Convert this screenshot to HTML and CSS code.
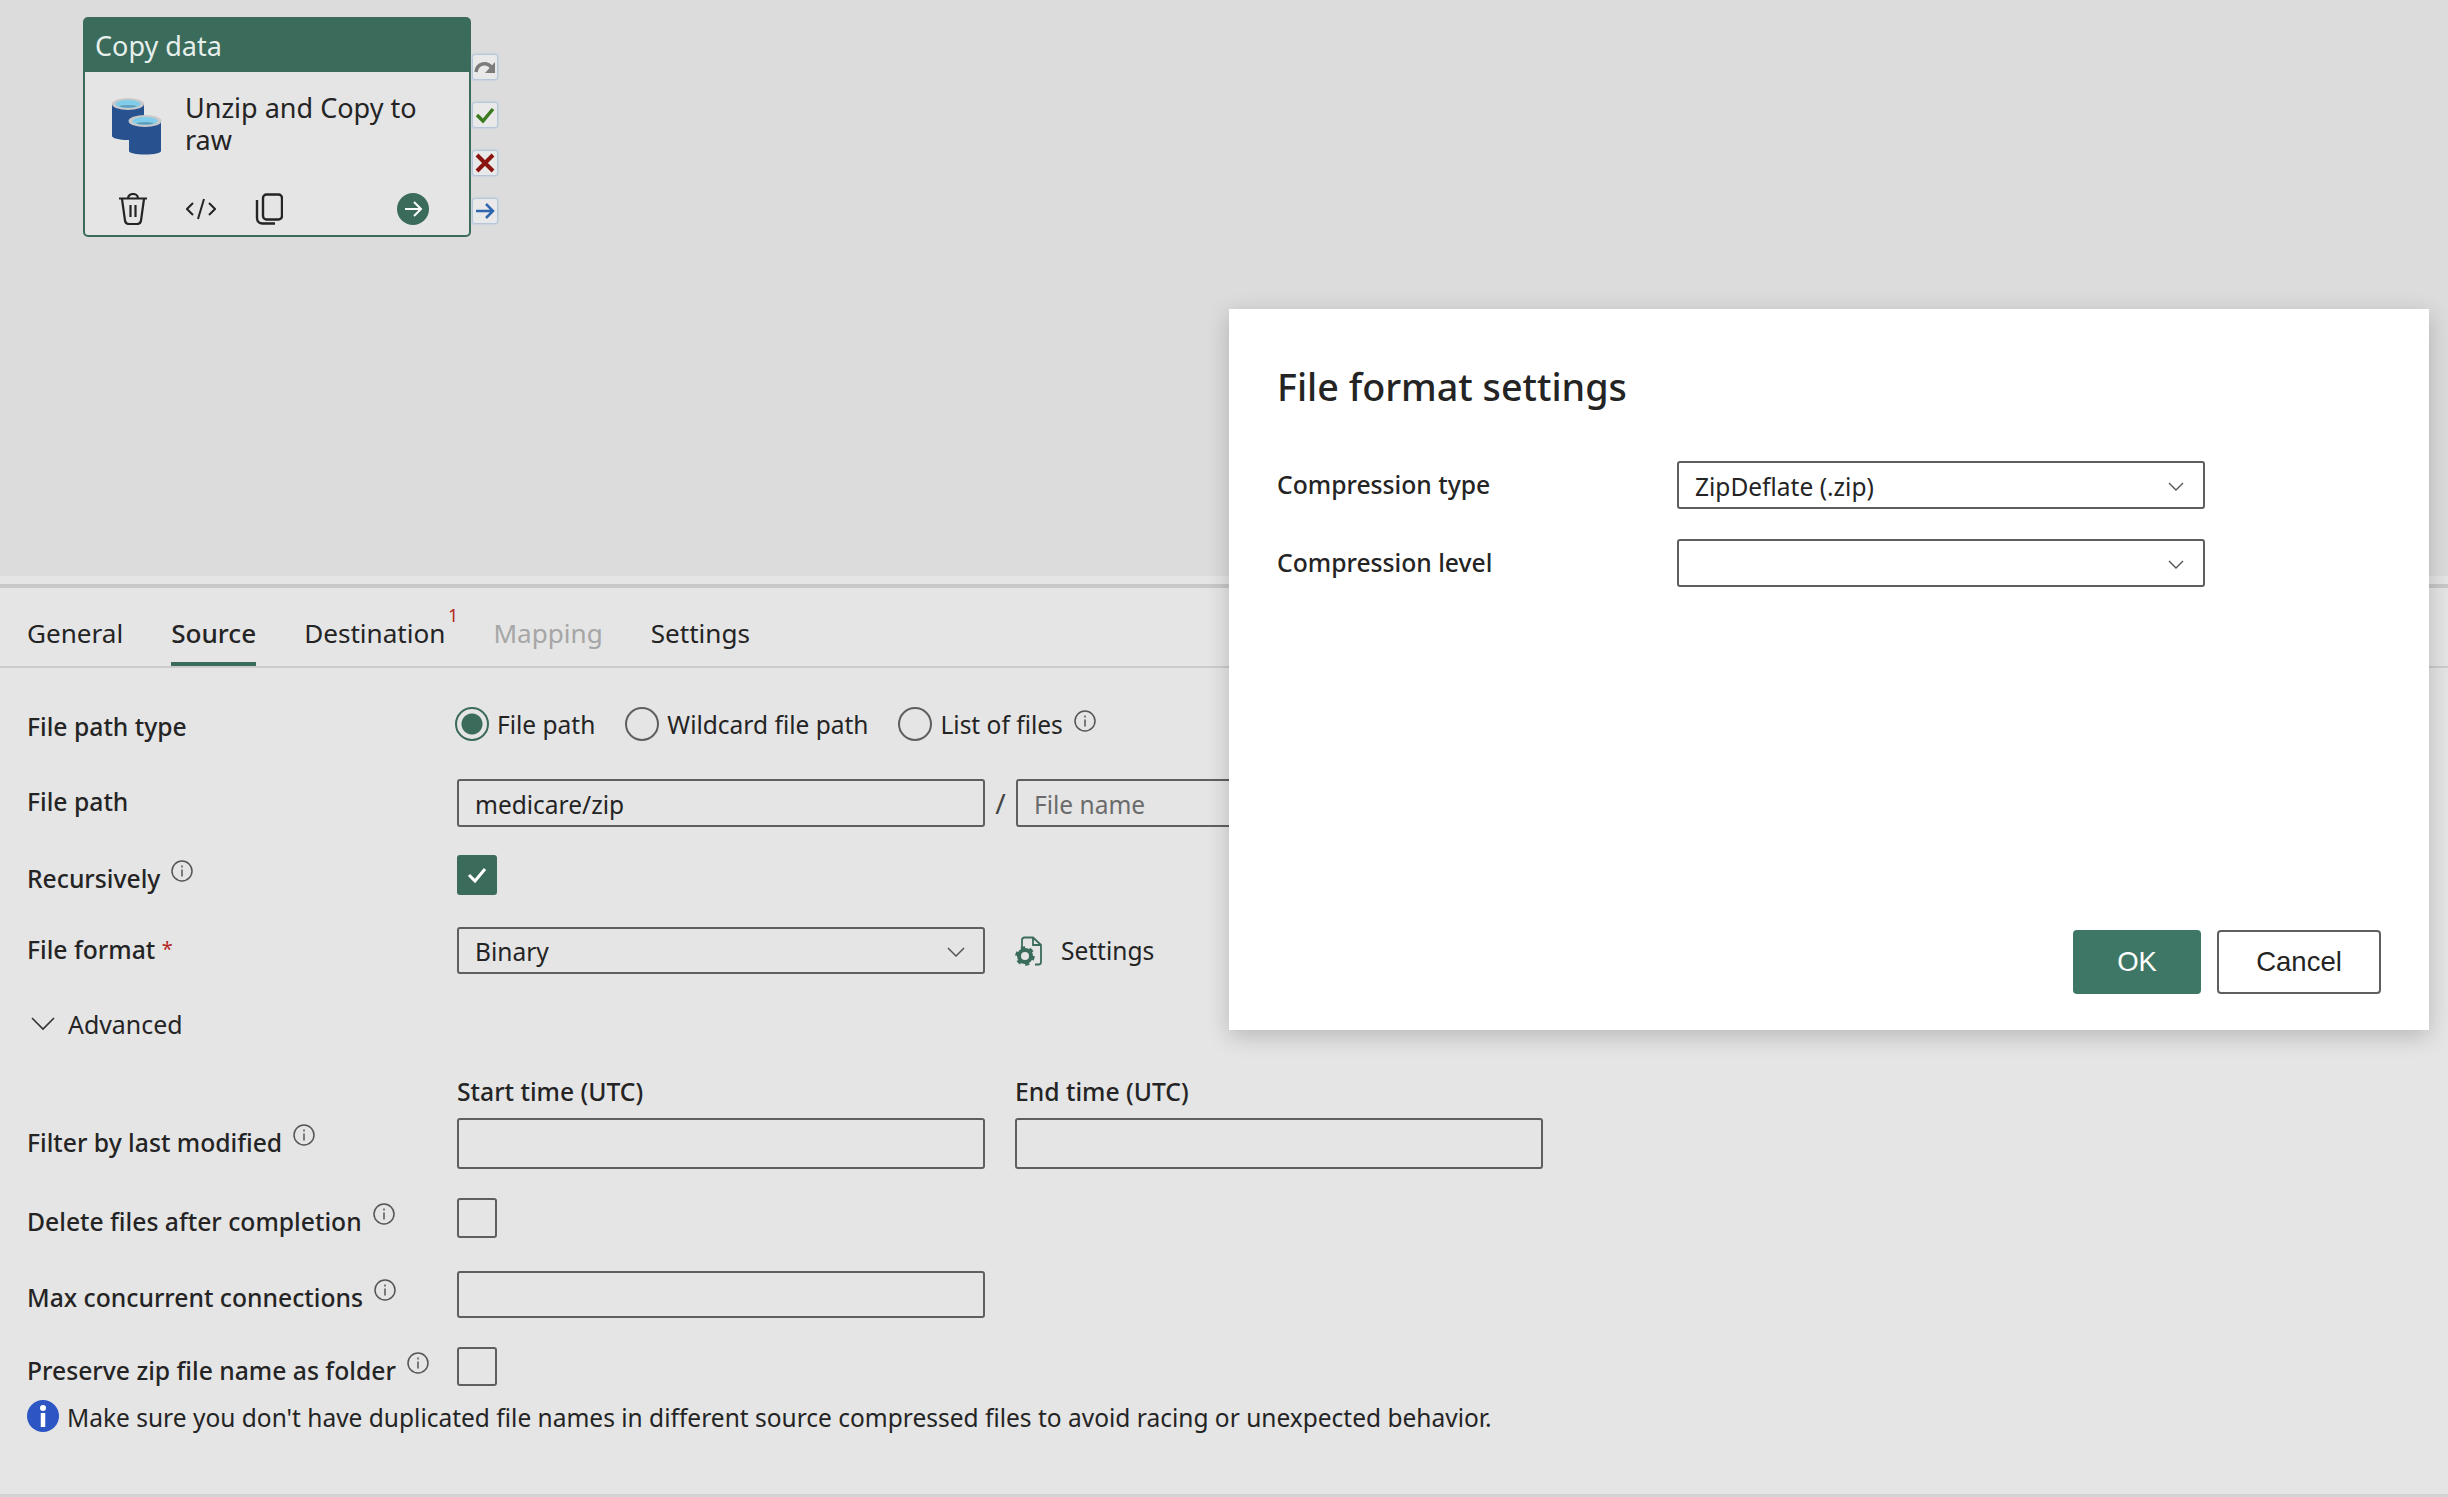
FILE: index.html
```html
<!DOCTYPE html>
<html>
<head>
  <title>File format settings</title>
  <meta charset="utf-8" />
  <link rel="stylesheet" href="styles.css">
</head>
<body>
  <div class="canvas">
    <div class="node">
      <div class="node-head">Copy data</div>
      <div class="node-main">
        <svg class="db-icon" width="52" height="58" viewBox="0 0 52 58">
          <path d="M1 7v32c0 2 7 4 16 4s16-2 16-4V7z" fill="#27528f"/>
          <ellipse cx="17" cy="7" rx="16" ry="6" fill="#c9c9c9"/>
          <ellipse cx="17" cy="7" rx="12.5" ry="4" fill="#7fcdea"/>
          <path d="M8 9c3-1 15-1 18 0-3 2-15 2-18 0z" fill="#5f9ab8"/>
          <path d="M18 24v30c0 2 7 3.500 16 3.500s16-1.500 16-3.500V24z" fill="#27528f"/>
          <ellipse cx="34" cy="24" rx="16.500" ry="6" fill="#c9c9c9"/>
          <ellipse cx="34" cy="24" rx="12.500" ry="4" fill="#7fcdea"/>
          <path d="M25 26c3-1 15-1 18 0-3 2-15 2-18 0z" fill="#5f9ab8"/>
        </svg>
        <div class="node-name">Unzip and Copy to raw</div>
      </div>
      <div class="node-tools">
        <svg class="tool-trash" width="30" height="32" viewBox="0 0 30 32">
          <path d="M1 5.500h28M10 5.500c0-6 10-6 10 0M4 6l3 21.500c.4 2.500 2 3.500 4 3.500h8c2 0 3.600-1 4-3.500L26 6M12.500 12v12M17.500 12v12" fill="none" stroke="#242424" stroke-width="2.200"/>
        </svg>
        <svg class="tool-code" width="30" height="24" viewBox="0 0 30 24">
          <path d="M7 6l-6 6 6 6M23 6l6 6-6 6M18 2l-6 20" fill="none" stroke="#242424" stroke-width="2"/>
        </svg>
        <svg class="tool-copy" width="28" height="32" viewBox="0 0 28 32">
          <rect x="8" y="1.500" width="19" height="25" rx="3.500" fill="none" stroke="#242424" stroke-width="2.400"/>
          <path d="M2 7v18c0 3.500 2.500 5.500 5.500 5.500H20" fill="none" stroke="#242424" stroke-width="2.400"/>
        </svg>
        <svg class="tool-go" width="32" height="32" viewBox="0 0 32 32">
          <circle cx="16" cy="16" r="16" fill="#3a6b5b"/>
          <path d="M8 16h16M17 9l7 7-7 7" fill="none" stroke="#fff" stroke-width="2"/>
        </svg>
      </div>
    </div>
    <div class="node-ports">
      <div class="port">
        <svg width="22" height="18" viewBox="0 0 22 18"><path d="M2 14C3 5 13 3 18 10" fill="none" stroke="#7c7c7c" stroke-width="3.500"/><path d="M21 4v11H11z" fill="#7c7c7c"/></svg>
      </div>
      <div class="port">
        <svg width="20" height="18" viewBox="0 0 20 18"><path d="M2 9l6 6L18 3" fill="none" stroke="#3b7a1f" stroke-width="3.500"/></svg>
      </div>
      <div class="port">
        <svg width="20" height="20" viewBox="0 0 20 20"><path d="M2 2l16 16M18 2L2 18" fill="none" stroke="#8a1410" stroke-width="4"/></svg>
      </div>
      <div class="port">
        <svg width="20" height="18" viewBox="0 0 20 18"><path d="M1 9h17M11 2l7 7-7 7" fill="none" stroke="#2f66b0" stroke-width="2.500"/></svg>
      </div>
    </div>
  </div>

  <div class="panel">
    <div class="tabs">
      <span class="tab">General</span>
      <span class="tab active">Source</span>
      <span class="tab">Destination<span class="badge">1</span></span>
      <span class="tab disabled">Mapping</span>
      <span class="tab">Settings</span>
    </div>

    <div class="form">
      <div class="row row-type">
        <label class="lbl drop-8">File path type</label>
        <div class="radios">
          <span class="radio on"></span><span class="radio-text">File path</span>
          <span class="radio gap"></span><span class="radio-text">Wildcard file path</span>
          <span class="radio gap"></span><span class="radio-text">List of files</span>
          <svg class="info-flat" width="22" height="22" viewBox="0 0 22 22"><circle cx="11" cy="11" r="10" fill="none" stroke="#555" stroke-width="1.500"/><path d="M11 9.500v7M11 5.500v2" stroke="#555" stroke-width="1.500"/></svg>
        </div>
      </div>

      <div class="row row-path">
        <label class="lbl">File path</label>
        <div class="ctl">
          <div class="field">medicare/zip</div>
          <span class="slash">/</span>
          <div class="field holder">File name</div>
        </div>
      </div>

      <div class="row row-rec">
        <label class="lbl drop-6">Recursively<svg class="info" width="22" height="22" viewBox="0 0 22 22"><circle cx="11" cy="11" r="10" fill="none" stroke="#555" stroke-width="1.500"/><path d="M11 9.500v7M11 5.500v2" stroke="#555" stroke-width="1.500"/></svg></label>
        <div class="check on">
          <svg width="22" height="20" viewBox="0 0 22 20"><path d="M3 10l6 6L19 4" fill="none" stroke="#fff" stroke-width="3"/></svg>
        </div>
      </div>

      <div class="row row-format">
        <label class="lbl">File format <span class="req">*</span></label>
        <div class="ctl">
          <div class="field select">Binary
            <svg class="chev" width="18" height="10" viewBox="0 0 18 10"><path d="M1 1l8 8 8-8" fill="none" stroke="#555" stroke-width="1.500"/></svg>
          </div>
          <div class="fmt-settings">
            <svg width="28" height="30" viewBox="0 0 28 30">
              <path d="M7 11V4c0-1.500 1-2.500 2.500-2.500H18L26 9v17c0 1.500-1 2.500-2.500 2.500H20M18 1.500V9h8" fill="none" stroke="#3a6b5b" stroke-width="1.800"/>
              <circle cx="10" cy="20" r="6" fill="none" stroke="#3a6b5b" stroke-width="4"/>
              <circle cx="10" cy="20" r="8" fill="none" stroke="#3a6b5b" stroke-width="3.500" stroke-dasharray="4 4.380"/>
            </svg>
            <span>Settings</span>
          </div>
        </div>
      </div>

      <div class="advanced">
        <svg width="24" height="14" viewBox="0 0 24 14"><path d="M1 1l11 11L23 1" fill="none" stroke="#333" stroke-width="1.600"/></svg>
        <span>Advanced</span>
      </div>

      <div class="row row-heads">
        <span></span>
        <div class="times">
          <span class="lbl">Start time (UTC)</span>
          <span class="lbl">End time (UTC)</span>
        </div>
      </div>

      <div class="row row-time">
        <label class="lbl lift">Filter by last modified<svg class="info" width="22" height="22" viewBox="0 0 22 22"><circle cx="11" cy="11" r="10" fill="none" stroke="#555" stroke-width="1.500"/><path d="M11 9.500v7M11 5.500v2" stroke="#555" stroke-width="1.500"/></svg></label>
        <div class="times">
          <div class="field"></div>
          <div class="field"></div>
        </div>
      </div>

      <div class="row row-del">
        <label class="lbl drop-6">Delete files after completion<svg class="info" width="22" height="22" viewBox="0 0 22 22"><circle cx="11" cy="11" r="10" fill="none" stroke="#555" stroke-width="1.500"/><path d="M11 9.500v7M11 5.500v2" stroke="#555" stroke-width="1.500"/></svg></label>
        <div class="check"></div>
      </div>

      <div class="row row-max">
        <label class="lbl drop-4">Max concurrent connections<svg class="info" width="22" height="22" viewBox="0 0 22 22"><circle cx="11" cy="11" r="10" fill="none" stroke="#555" stroke-width="1.500"/><path d="M11 9.500v7M11 5.500v2" stroke="#555" stroke-width="1.500"/></svg></label>
        <div class="field"></div>
      </div>

      <div class="row row-zip">
        <label class="lbl drop-6">Preserve zip file name as folder<svg class="info" width="22" height="22" viewBox="0 0 22 22"><circle cx="11" cy="11" r="10" fill="none" stroke="#555" stroke-width="1.500"/><path d="M11 9.500v7M11 5.500v2" stroke="#555" stroke-width="1.500"/></svg></label>
        <div class="check"></div>
      </div>

      <div class="note">
        <svg width="32" height="32" viewBox="0 0 32 32"><circle cx="16" cy="16" r="16" fill="#2d56c4"/><circle cx="16" cy="8" r="3" fill="#fff"/><path d="M16 13v14" stroke="#fff" stroke-width="4.500"/></svg>
        <span>Make sure you don't have duplicated file names in different source compressed files to avoid racing or unexpected behavior.</span>
      </div>
    </div>
  </div>

  <div class="dialog">
    <h2>File format settings</h2>
    <div class="dlg-row">
      <label class="lbl">Compression type</label>
      <div class="field select">ZipDeflate (.zip)
        <svg class="chev" width="16" height="9" viewBox="0 0 16 9"><path d="M1 1l7 7 7-7" fill="none" stroke="#555" stroke-width="1.400"/></svg>
      </div>
    </div>
    <div class="dlg-row">
      <label class="lbl">Compression level</label>
      <div class="field select">
        <svg class="chev" width="16" height="9" viewBox="0 0 16 9"><path d="M1 1l7 7 7-7" fill="none" stroke="#555" stroke-width="1.400"/></svg>
      </div>
    </div>
    <div class="dlg-foot">
      <button class="btn primary">OK</button>
      <button class="btn">Cancel</button>
    </div>
  </div>
</body>
</html>
```

FILE: styles.css
```css
html, body {
  height: 100%;
}

body {
  margin: 0;
  padding: 0;
  background: #e5e5e5;
  color: #242424;
  font-family: "Noto Sans", "Liberation Sans", sans-serif;
  font-size: 24.5px;
  overflow: hidden;
  position: relative;
}

/* pipeline canvas */
.canvas {
  position: relative;
  height: 576px;
  background: #dcdcdc;
}

.node {
  position: absolute;
  left: 83px;
  top: 17px;
  width: 388px;
  height: 220px;
  box-sizing: border-box;
  display: flex;
  flex-direction: column;
  background: #e5e5e5;
  border: 2px solid #3a6b5b;
  border-radius: 5px;
}

.node-head {
  height: 53px;
  padding-left: 10px;
  line-height: 54px;
  font-size: 27px;
  color: #e6efeb;
  background: #3a6b5b;
}

.node-main {
  display: flex;
  align-items: center;
  height: 107px;
}

.db-icon {
  margin-left: 26px;
  flex: none;
}

.node-name {
  margin-left: 22px;
  padding-bottom: 3px;
  width: 250px;
  font-size: 27px;
  line-height: 32px;
}

.node-tools {
  display: flex;
  align-items: center;
  height: 32px;
  margin-top: 14px;
  padding-left: 33px;
}

.tool-code {
  margin-left: 38px;
}

.tool-copy {
  margin-left: 39px;
}

.tool-go {
  margin-left: 114px;
}

.node-ports {
  position: absolute;
  left: 473px;
  top: 55px;
  display: flex;
  flex-direction: column;
  gap: 24px;
}

.port {
  width: 24px;
  height: 24px;
  display: flex;
  align-items: center;
  justify-content: center;
  background: #e9e9e9;
  box-shadow: 0 0 2px 1px #a9bfdc;
  border-radius: 2px;
}

/* bottom panel */
.panel {
  height: 921px;
  box-sizing: border-box;
  padding-top: 8px;
  border-bottom: 3px solid #d2d2d2;
}

.tabs {
  display: flex;
  gap: 48px;
  height: 78px;
  padding-left: 27px;
  border-top: 4px solid #c8c8c8;
  border-bottom: 2px solid #cccccc;
}

.tab {
  height: 78px;
  box-sizing: border-box;
  padding-top: 26px;
  font-size: 26.1px;
  line-height: 38px;
  position: relative;
}

.tab.active {
  font-weight: 500;
  border-bottom: 4px solid #3a6b5b;
}

.tab.disabled {
  color: #a6a6a6;
}

.badge {
  position: absolute;
  right: -13px;
  top: 17px;
  font-size: 18px;
  line-height: 20px;
  color: #b3261e;
}

.form {
  display: flex;
  flex-direction: column;
  padding-left: 27px;
}

.row {
  display: grid;
  grid-template-columns: 430px auto;
  grid-template-rows: 100%;
  align-items: center;
  justify-content: start;
}

.lbl {
  font-size: 24.7px;
  font-weight: 500;
  line-height: 30px;
  white-space: nowrap;
}

.row > .lbl {
  padding-bottom: 2px;
}

.row > .lbl.drop-4 { padding-top: 4px; }
.row > .lbl.drop-6 { padding-top: 6px; }
.row > .lbl.drop-8 { padding-top: 8px; }
.row > .lbl.lift { padding-bottom: 6px; }

.info {
  margin-left: 11px;
  vertical-align: 6px;
}

.info-flat {
  margin-left: 11px;
  margin-bottom: 6px;
}

.row-type { height: 34px; margin-top: 39px; }
.row-path { height: 48px; margin-top: 38px; }
.row-rec { height: 40px; margin-top: 28px; }
.row-format { height: 47px; margin-top: 32px; }
.row-heads { height: 30px; margin-top: 38px; }
.row-time { height: 51px; margin-top: 11px; }
.row-del { height: 40px; margin-top: 29px; }
.row-max { height: 47px; margin-top: 33px; }
.row-zip { height: 39px; margin-top: 29px; }

.radios {
  display: flex;
  align-items: center;
}

.radio {
  width: 34px;
  height: 34px;
  box-sizing: border-box;
  border: 2px solid #5f5f5f;
  border-radius: 50%;
  flex: none;
}

.radio.on {
  border-color: #3a6b5b;
  background: radial-gradient(circle, #3a6b5b 0 10px, transparent 11px);
  margin-left: -2px;
}

.radio.gap {
  margin-left: 30px;
}

.radio-text {
  margin-left: 8px;
}

.ctl {
  display: flex;
  align-items: center;
  height: 100%;
}

.field {
  width: 528px;
  height: 100%;
  box-sizing: border-box;
  display: flex;
  align-items: center;
  padding-left: 16px;
  padding-top: 2px;
  border: 2px solid #5f5f5f;
  border-radius: 3px;
  flex: none;
}

.holder {
  color: #6b6b6b;
}

.slash {
  width: 31px;
  text-align: center;
  font-size: 28px;
  color: #444;
}

.select {
  padding-right: 19px;
}

.row .select {
  padding-right: 18px;
}

.chev {
  margin-left: auto;
}

.fmt-settings {
  display: flex;
  align-items: center;
  gap: 18px;
  margin-left: 30px;
}

.req {
  font-size: 20px;
  font-weight: 400;
  vertical-align: 3px;
  color: #b3261e;
}

.check {
  width: 40px;
  height: 100%;
  box-sizing: border-box;
  border: 2px solid #5f5f5f;
  border-radius: 3px;
}

.check.on {
  display: flex;
  align-items: center;
  justify-content: center;
  background: #3a6b5b;
  border-color: #3a6b5b;
}

.advanced {
  display: flex;
  align-items: center;
  gap: 13px;
  height: 30px;
  margin-top: 35px;
  padding-left: 4px;
  font-size: 24.9px;
}

.times {
  display: flex;
  gap: 30px;
  height: 100%;
  align-items: center;
}

.times .lbl {
  width: 528px;
}

.note {
  display: flex;
  align-items: center;
  gap: 8px;
  margin-top: 12px;
}

.note span {
  padding-top: 3px;
}

/* modal */
.dialog {
  position: absolute;
  left: 1229px;
  top: 309px;
  width: 1200px;
  height: 721px;
  box-sizing: border-box;
  display: flex;
  flex-direction: column;
  padding: 53px 48px 36px;
  background: #fff;
  box-shadow: 0 6px 22px rgba(0, 0, 0, 0.2);
}

.dialog h2 {
  margin: 0 0 49px;
  font-size: 37.7px;
  line-height: 50px;
  font-weight: 500;
}

.dlg-row {
  display: grid;
  grid-template-columns: 400px 528px;
  align-items: center;
  height: 48px;
  margin-bottom: 30px;
}

.dlg-foot {
  display: flex;
  justify-content: flex-end;
  gap: 16px;
  margin-top: auto;
}

.btn {
  width: 164px;
  height: 64px;
  box-sizing: border-box;
  font-family: "Liberation Sans", sans-serif;
  font-size: 27.5px;
  color: #242424;
  background: #fff;
  border: 2px solid #5f5f5f;
  border-radius: 4px;
}

.btn.primary {
  width: 128px;
  color: #fff;
  background: #3e7766;
  border: none;
}
```
